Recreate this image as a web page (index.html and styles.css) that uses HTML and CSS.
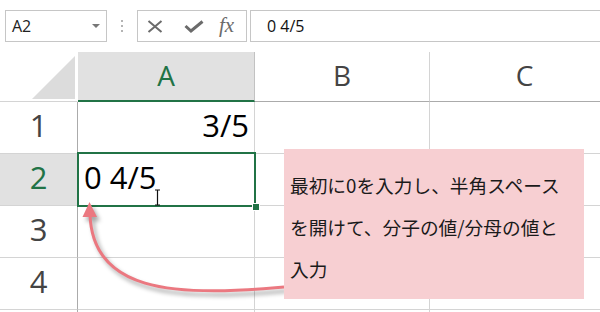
FILE: index.html
```html
<!DOCTYPE html>
<html lang="ja">
<head>
<meta charset="utf-8">
<title>Excel fraction input</title>
<link rel="stylesheet" href="styles.css">
</head>
<body>
<div class="toolbar">
  <div class="namebox"><span>A2</span><span class="caret"></span></div>
  <div class="dots"><i></i><i></i><i></i></div>
  <div class="fxbox">
    <svg class="ico-x" width="16" height="13" viewBox="0 0 16 13"><path d="M1.5 1 L14.5 12 M14.5 1 L1.5 12" stroke="#6b6b6b" stroke-width="2" fill="none"/></svg>
    <svg class="ico-check" width="20" height="13" viewBox="0 0 20 13"><path d="M1.5 6 L7 11 L18.5 1.5" stroke="#6b6b6b" stroke-width="3" fill="none"/></svg>
    <span class="fx">fx</span>
  </div>
  <div class="formula">0 4/5</div>
</div>

<div class="sheet">
  <div class="cell corner"><span class="tri"></span></div>
  <div class="cell ch sel">A</div>
  <div class="cell ch">B</div>
  <div class="cell ch">C</div>

  <div class="cell rh">1</div>
  <div class="cell val right">3/5</div>
  <div class="cell"></div>
  <div class="cell"></div>

  <div class="cell rh sel">2</div>
  <div class="cell val active">0 4/5</div>
  <div class="cell"></div>
  <div class="cell"></div>

  <div class="cell rh">3</div>
  <div class="cell"></div>
  <div class="cell"></div>
  <div class="cell"></div>

  <div class="cell rh">4</div>
  <div class="cell"></div>
  <div class="cell"></div>
  <div class="cell"></div>

  <div class="cell rh"></div>
  <div class="cell"></div>
  <div class="cell"></div>
  <div class="cell"></div>
</div>

<svg class="ibeam" width="7" height="17" viewBox="0 0 7 17"><path d="M1 1 H6 M3.5 1 V16 M1 16 H6" stroke="#111" stroke-width="1.2" fill="none"/></svg>

<svg class="arrow" width="600" height="312" viewBox="0 0 600 312">
  <path d="M284 287 C170 298 92 290 90 214" stroke="#eb7880" stroke-width="3" fill="none"/>
  <polygon points="89.5,202 82.5,217 97,217" fill="#eb7880"/>
</svg>

<div class="note">最初に0を入力し、半角スペース<br>を開けて、分子の値/分母の値と<br>入力</div>
</body>
</html>
```

FILE: styles.css
```css
* { box-sizing: border-box; }
html, body { margin: 0; padding: 0; }
body {
  width: 600px;
  height: 312px;
  overflow: hidden;
  position: relative;
  background: #fff;
  font-family: "Open Sans", "Noto Sans CJK JP", sans-serif;
}

.toolbar {
  display: flex;
  align-items: flex-start;
  height: 52px;
  padding-top: 10px;
}
.namebox {
  margin-left: 5px;
  width: 102px;
  height: 32px;
  border: 1px solid #c6c6c6;
  display: flex;
  align-items: center;
  justify-content: space-between;
  padding: 0 6px 0 6px;
  font-size: 16px;
  color: #222;
}
.caret {
  width: 0;
  height: 0;
  border-left: 4px solid transparent;
  border-right: 4px solid transparent;
  border-top: 4px solid #777;
}
.dots {
  margin-left: 14px;
  width: 3px;
  padding-top: 10px;
  display: flex;
  flex-direction: column;
  gap: 3px;
}
.dots i {
  display: block;
  width: 2px;
  height: 2px;
  background: #b4b4b4;
}
.fxbox {
  margin-left: 13px;
  width: 110px;
  height: 32px;
  border: 1px solid #c6c6c6;
  display: flex;
  align-items: center;
  padding-left: 9px;
}
.ico-x { margin-right: 21px; }
.ico-check { margin-right: 15px; }
.fx {
  font-family: "Liberation Serif", "DejaVu Serif", serif;
  font-style: italic;
  font-size: 21px;
  color: #6b6b6b;
  line-height: 1;
  margin-top: -2px;
}
.formula {
  margin-left: 3px;
  margin-right: -20px;
  flex: 1;
  height: 32px;
  border: 1px solid #c6c6c6;
  display: flex;
  align-items: center;
  padding-left: 16px;
  font-size: 16px;
  color: #111;
}

.sheet {
  display: grid;
  grid-template-columns: 78px 177px 175px 190px;
  grid-template-rows: 50px repeat(5, 52px);
}
.cell {
  border-right: 1px solid #d4d4d4;
  border-bottom: 1px solid #d4d4d4;
  min-width: 0;
}
.corner {
  border-right-color: transparent;
  display: flex;
  align-items: flex-end;
  justify-content: flex-end;
  padding: 0 2px 2px 0;
}
.tri {
  width: 43px;
  height: 43px;
  background: #dcdcdc;
  clip-path: polygon(100% 0, 100% 100%, 0 100%);
}
.ch {
  border-bottom-color: #ababab;
  font-size: 28px;
  line-height: 46px;
  text-align: center;
  color: #444;
}
.ch.sel {
  background: #e1e1e1;
  color: #217346;
  border-bottom: 2px solid #217346;
  border-right-color: #c2c2c2;
}
.rh {
  border-right-color: #ababab;
  font-size: 31px;
  line-height: 46px;
  text-align: center;
  color: #444;
}
.rh.sel {
  background: #e1e1e1;
  color: #217346;
}
.val {
  font-size: 31px;
  line-height: 46px;
  padding: 0 5px 0 6px;
  color: #000;
  white-space: nowrap;
}
.right { text-align: right; }
.active { position: relative; }
.active::after {
  content: "";
  position: absolute;
  left: -1px;
  top: -2px;
  right: -2px;
  bottom: -2px;
  border: 2px solid #217346;
  pointer-events: none;
}
.active::before {
  content: "";
  position: absolute;
  left: 174px;
  top: 49px;
  width: 6px;
  height: 6px;
  background: #217346;
  border: 1px solid #fff;
  z-index: 2;
}

.ibeam {
  position: absolute;
  left: 154px;
  top: 189px;
}
.arrow {
  position: absolute;
  left: 0;
  top: 0;
  filter: drop-shadow(3px 4px 2px rgba(0, 0, 0, 0.35));
}
.note {
  position: absolute;
  left: 284px;
  top: 149px;
  width: 300px;
  height: 150px;
  background: #f7cfd2;
  padding: 15px 0 0 6px;
  font-family: "Noto Sans CJK JP", sans-serif;
  font-weight: 400;
  font-size: 18.7px;
  line-height: 42px;
  color: #1a1a1a;
  white-space: nowrap;
}
```
